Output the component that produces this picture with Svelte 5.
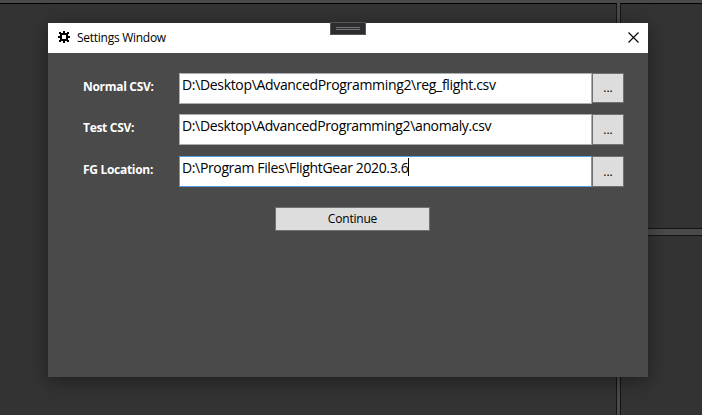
<script>
  const rows = [
    { label: 'Normal CSV:', value: 'D:\\Desktop\\AdvancedProgramming2\\reg_flight.csv', cls: 'first' },
    { label: 'Test CSV:', value: 'D:\\Desktop\\AdvancedProgramming2\\anomaly.csv', cls: 'second' },
    { label: 'FG Location:', value: 'D:\\Program Files\\FlightGear 2020.3.6', cls: 'third', focused: true }
  ];
</script>

<div class="desktop">
  <div class="panes">
    <div class="pane left"></div>
    <div class="column">
      <div class="pane top"></div>
      <div class="pane bottom"></div>
    </div>
  </div>

  <div class="window">
    <header>
      <svg class="gear" width="12" height="12" viewBox="0 0 12 12" shape-rendering="crispEdges">
        <path fill="#000" fill-rule="evenodd" d="M5 0h2v2h2V1h2v2h-1v2h2v2h-2v2h1v2H9v-1H7v2H5v-2H3v1H1V9h1V7H0V5h2V3H1V1h2v1h2zM4 4v4h4V4z" />
      </svg>
      <span class="title">Settings Window</span>
      <svg class="close" width="11" height="11" viewBox="0 0 11 11">
        <path d="M.5.5l10 10M10.5.5l-10 10" stroke="#000" stroke-width="1.1" fill="none" />
      </svg>
    </header>
    <main>
      {#each rows as row}
        <div class="row {row.cls}">
          <span class="label"><span>{row.label}</span></span>
          <div class="field" class:focused={row.focused}>
            <span class="value">{row.value}</span>{#if row.focused}<i class="caret"></i>{/if}
          </div>
          <button class="browse">...</button>
        </div>
      {/each}
      <button class="continue"><span>Continue</span></button>
    </main>
  </div>

  <div class="handle"><i></i><i></i></div>
</div>

<style>
  :global(body) { overflow: hidden; }
  .desktop {
    position: relative;
    width: 702px;
    height: 415px;
    overflow: hidden;
    background: #4a4a4a;
    font-family: "Open Sans", "Noto Sans", sans-serif;
  }
  .panes { display: flex; gap: 3px; height: 100%; padding-top: 3px; box-sizing: border-box; }
  .pane { background: #333; border: 0 solid #151515; box-sizing: border-box; }
  .left { width: 617px; border-width: 1px 1px 0 0; border-top-color: #000; }
  .column { flex: 1; display: flex; flex-direction: column; gap: 6px; }
  .top { height: 226px; border-width: 1px 0 1px 1px; border-top-color: #000; }
  .bottom { flex: 1; border-width: 1px 0 0 1px; }
  .window {
    position: absolute;
    left: 48px;
    top: 23px;
    width: 600px;
    height: 354px;
    background: #4a4a4a;
    box-shadow: 0 4px 18px rgba(0, 0, 0, .4);
  }
  header {
    height: 30px;
    display: flex;
    align-items: center;
    background: #fff;
    padding: 0 9px 0 10px;
    box-sizing: border-box;
  }
  .gear { margin-top: -2px; }
  .title { margin-left: 7px; font-size: 12px; line-height: 16px; color: #000; letter-spacing: -.27px; white-space: nowrap; }
  .close { margin-left: auto; margin-top: -1px; }
  main { display: flex; flex-direction: column; padding: 20px 24px 0 35px; }
  .row { display: flex; height: 31px; }
  .second { margin-top: 10px; }
  .third { margin-top: 11px; }
  .label { width: 96px; color: #fff; font-size: 12px; font-weight: 700; line-height: 27px; white-space: nowrap; letter-spacing: -.3px; }
  .field {
    width: 413px;
    box-sizing: border-box;
    border: 1px solid #abadb3;
    background: #fff;
    display: flex;
    align-items: flex-start;
    padding: 1px 0 0 2px;
    color: #000;
    font-size: 14px;
    line-height: 20px;
    letter-spacing: -.36px;
    white-space: nowrap;
  }
  .first .field { letter-spacing: -.33px; }
  .focused { border-color: #569de5; }
  .caret { width: 1px; height: 18px; background: #000; }
  button {
    margin: 0;
    padding: 0;
    box-sizing: border-box;
    border: 1px solid #707070;
    border-radius: 0;
    background: #ddd;
    color: #000;
    font-family: inherit;
    font-size: 12px;
  }
  .browse { width: 32px; line-height: 28px; }
  .first .browse { height: 30px; }
  .continue { width: 155px; height: 24px; margin: 20px 0 0 192px; line-height: 22px; letter-spacing: -.2px; }
  .handle {
    position: absolute;
    left: 330px;
    top: 22px;
    width: 36px;
    height: 13px;
    box-sizing: border-box;
    border: 1px solid #555558;
    background: #2d2d30;
    padding: 4px 5px 0;
    display: flex;
    flex-direction: column;
    gap: 1px;
  }
  .handle i { height: 1px; background: #77777a; }
</style>
